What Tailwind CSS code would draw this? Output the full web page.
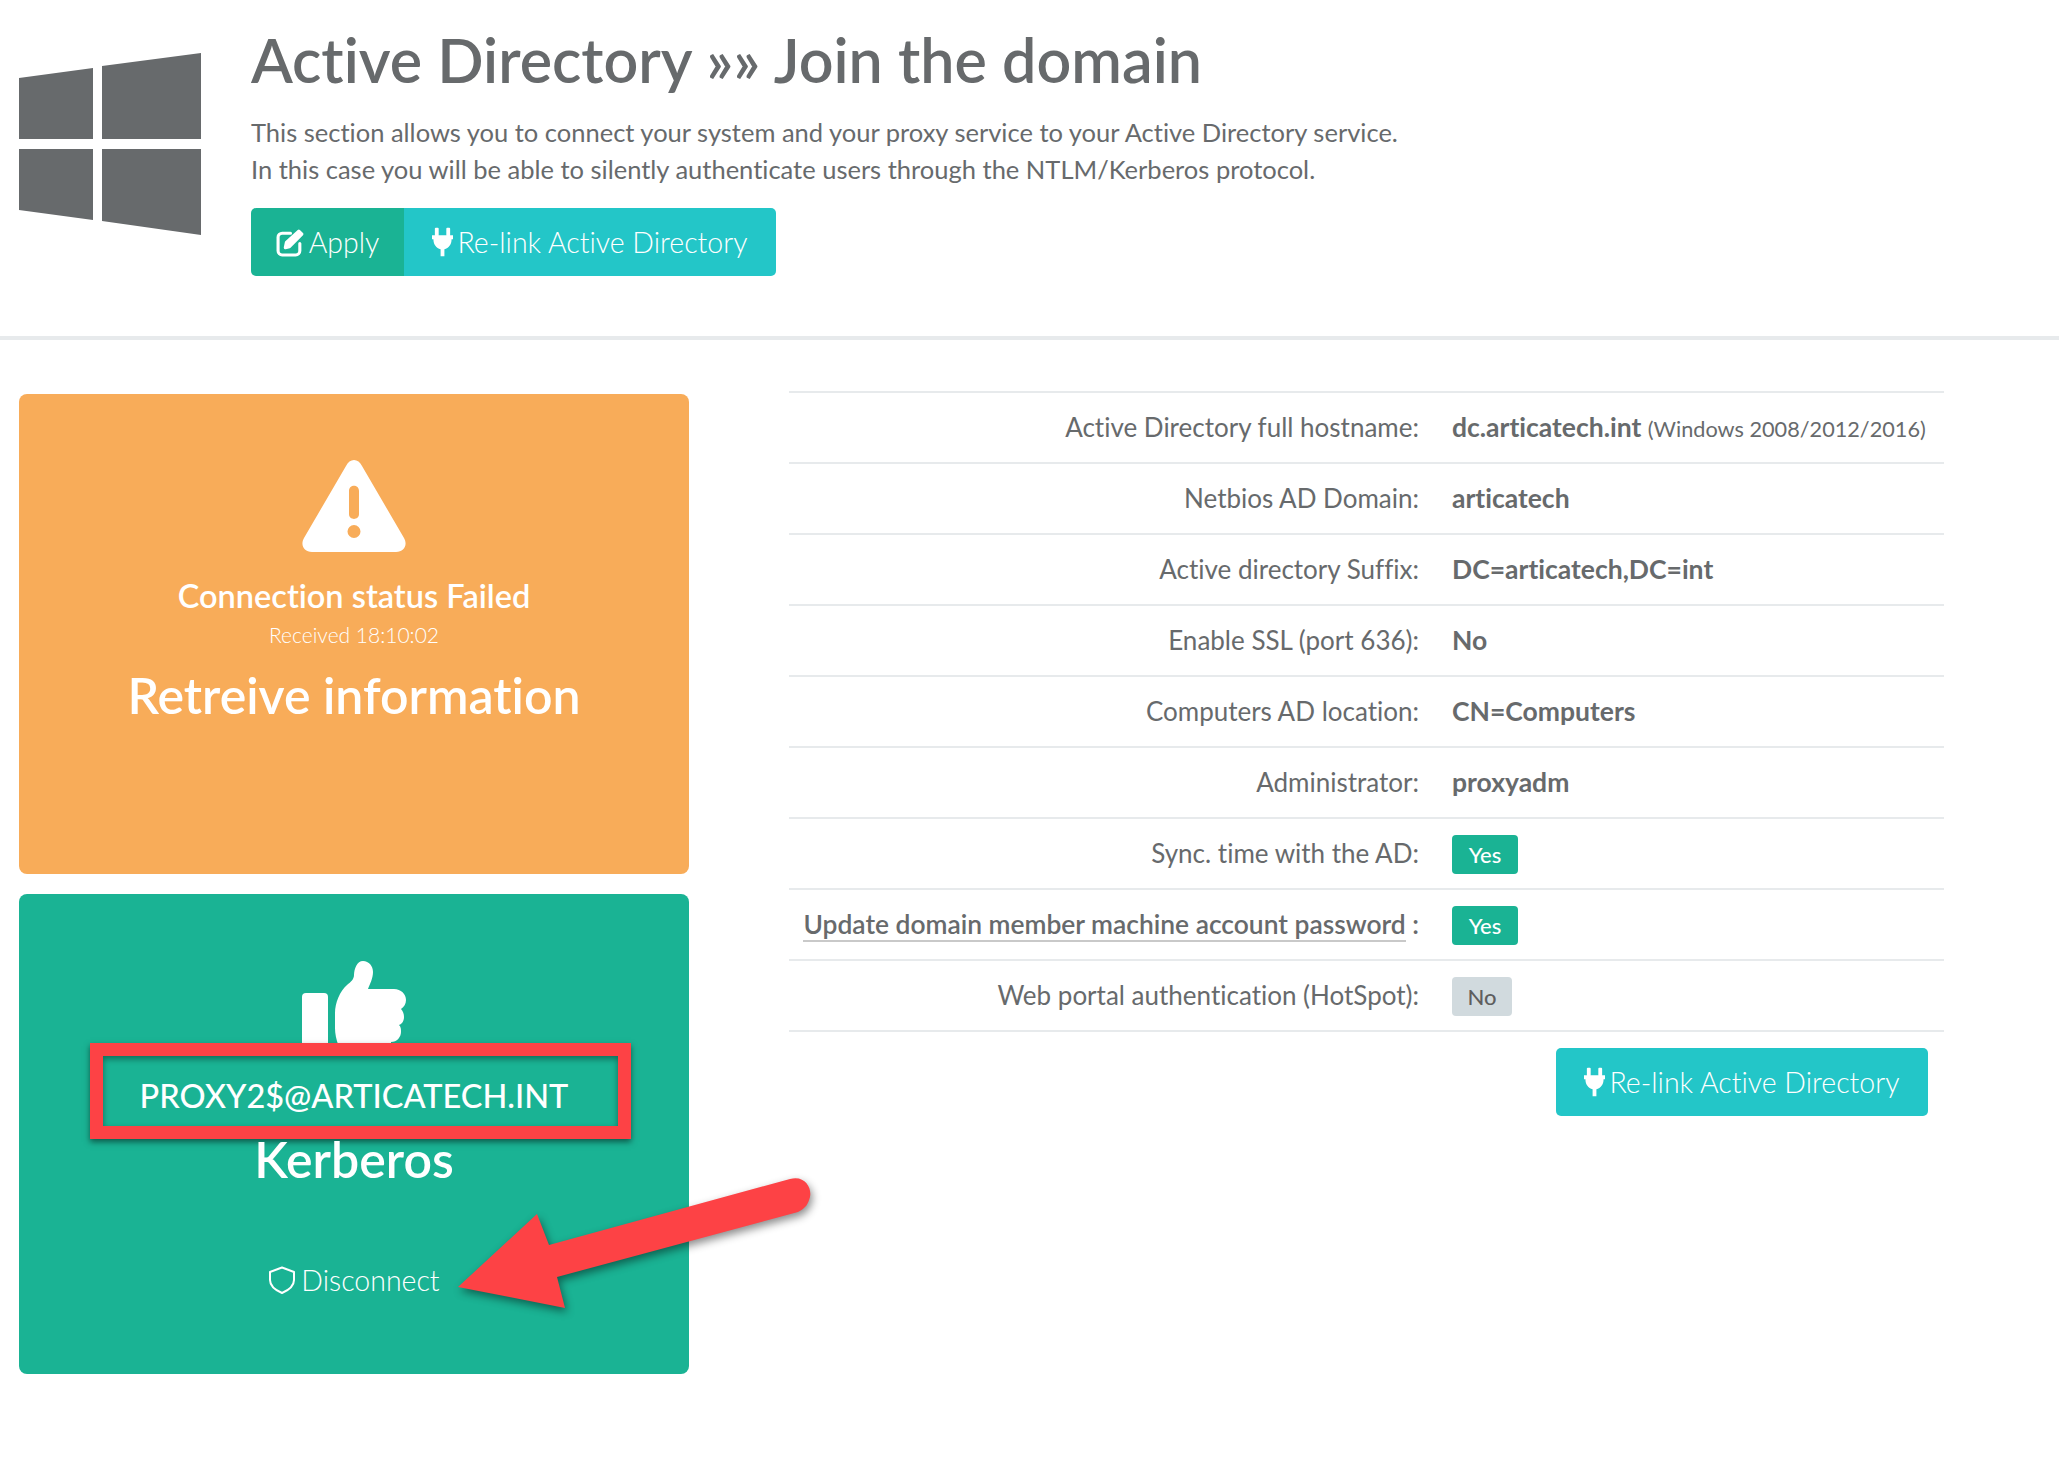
<!DOCTYPE html>
<html lang="en">
<head>
    <meta charset="UTF-8">
    <meta name="viewport" content="width=device-width, initial-scale=1.0">
    <title>Active Directory - Join the domain</title>
    <script src="https://cdn.jsdelivr.net/npm/@tailwindcss/browser@4"></script>
</head>
<body class="relative min-h-screen bg-white text-[#676a6c] font-['Lato','Open_Sans',sans-serif] [font-variant-ligatures:none] overflow-hidden">
    <!-- page heading -->
    <header class="flex h-[340px] pl-[19px] border-b-4 border-[#e7eaec]">
        <svg class="w-[182px] h-[182px] mt-[53px] shrink-0" viewBox="19 53 182 182" fill="#676a6c">
            <polygon points="19,78 93,68 93,139 19,139"/>
            <polygon points="102,66 201,53 201,139 102,139"/>
            <polygon points="19,149 93,149 93,220 19,210"/>
            <polygon points="102,149 201,149 201,235 102,221"/>
        </svg>
        <div class="ml-[50px]">
            <h1 class="mt-[25px] text-[61px] leading-[70px] font-semibold">Active Directory »» Join the domain</h1>
            <p class="mt-[19px] text-[25.5px] leading-[37px] font-normal">This section allows you to connect your system and your proxy service to your Active Directory service.<br>In this case you will be able to silently authenticate users through the NTLM/Kerberos protocol.</p>
            <div class="flex mt-[20px] h-[68px] w-[525px] rounded-[5px] overflow-hidden text-white text-[28.5px] font-light">
                <button class="flex items-center justify-center w-[153px] bg-[#1ab394]">
                    <svg class="w-[29px] h-[29px] mr-[4px]" viewBox="0 0 28 28" fill="none" stroke="#fff" stroke-width="3" stroke-linecap="round" stroke-linejoin="round">
                        <path d="M14 5H6a4 4 0 0 0-4 4v13a4 4 0 0 0 4 4h13a4 4 0 0 0 4-4v-7"/>
                        <path d="M10 14 22 3l3 3-12 12-4 1z" fill="#fff"/>
                    </svg>
                    Apply
                </button>
                <button class="flex items-center justify-center flex-1 bg-[#23c6c8]">
                    <svg class="w-[21px] h-[30px] mr-[4px]" viewBox="0 0 22 30" fill="#fff">
                        <rect x="3" y="0" width="4" height="9" rx="1"/><rect x="15" y="0" width="4" height="9" rx="1"/>
                        <path d="M0 8h22v4h-1.500c0 6-3 9-7.500 10.500V30h-4v-7.500C4.500 21 1.500 18 1.500 12H0z"/>
                    </svg>
                    Re-link Active Directory
                </button>
            </div>
        </div>
    </header>

    <main class="flex pl-[19px] pt-[54px]">
        <!-- status cards -->
        <section class="w-[670px] shrink-0 flex flex-col gap-[20px] text-white text-center">
            <div class="h-[480px] pt-[66px] rounded-[8px] bg-[#f8ac59]">
                <svg class="block mx-auto w-[104px] h-[92px]" viewBox="0 0 104 92">
                    <path fill="#fff" fill-rule="evenodd" d="M44 6c3.500-8 12.500-8 16 0l42 72c4 7 0 14-8 14H10C2 92-2 85 2 78zM47 54c0 6.500 10 6.500 10 0V31c0-7-10-7-10 0zM52 65a6.500 6.500 0 1 0 0 13 6.500 6.500 0 0 0 0-13z"/>
                </svg>
                <p class="mt-[24px] text-[32.5px] leading-[40px] font-semibold">Connection status Failed</p>
                <p class="mt-[5px] text-[21px] leading-[28px] font-light">Received 18:10:02</p>
                <h2 class="mt-[15px] text-[50px] leading-[62px] font-semibold">Retreive information</h2>
            </div>
            <div class="relative h-[480px] pt-[67px] rounded-[8px] bg-[#1ab394]">
                <svg class="block mx-auto w-[104px] h-[100px]" viewBox="302 961 104 100" fill="#fff">
                    <rect x="302" y="993" width="26" height="68" rx="4"/>
                    <path d="M354 975c0-6 3-14 9-14 6 0 10 5 10 11 0 6-3 12-5 17h26c7 0 12 5 12 11 0 4-2 7-5 9 2 2 3 5 3 8 0 4-2 7-5 8 2 2 2 4 2 7 0 5-4 10-10 10v19h-42c-9-8-14-22-14-33V1013c0-10 5-22 12-28 4-3 7-6 7-10z"/>
                </svg>
                <div class="absolute left-[71px] top-[149px] w-[541px] h-[96px] bg-[#1ab394] border-[13px] border-[#fd4245] shadow-[0_3px_6px_rgba(0,0,0,0.5),inset_0_3px_6px_rgba(0,0,0,0.4)]"></div>
                <p class="relative z-10 mt-[15px] text-[32.5px] leading-[40px] font-medium">PROXY2$@ARTICATECH.INT</p>
                <h2 class="relative z-10 mt-[12px] text-[50px] leading-[62px] font-semibold">Kerberos</h2>
                <a class="flex items-center justify-center mt-[72px] text-[28.5px] leading-[36px] font-light">
                    <svg class="w-[28px] h-[28px] mr-[5px]" viewBox="0 0 28 28" fill="none" stroke="#fff" stroke-width="2" stroke-linejoin="round">
                        <path d="M14 1.500 26 6v8c0 6-5 10-12 13C7 24 2 20 2 14V6z"/>
                    </svg>
                    Disconnect
                </a>
            </div>
        </section>

        <!-- settings table -->
        <section class="ml-[100px] w-[1155px] shrink-0">
            <table class="w-full border-collapse -mt-[3px] text-[26px]">
                <tbody>
                    <tr class="h-[71px] border-y-2 border-[#e7eaec]"><td class="w-[663px] pr-[33px] text-right font-normal">Active Directory full hostname:</td><td class="font-bold text-[26.5px]">dc.articatech.int <span class="text-[21.7px] font-normal">(Windows 2008/2012/2016)</span></td></tr>
                    <tr class="h-[71px] border-b-2 border-[#e7eaec]"><td class="pr-[33px] text-right font-normal">Netbios AD Domain:</td><td class="font-bold text-[26.5px]">articatech</td></tr>
                    <tr class="h-[71px] border-b-2 border-[#e7eaec]"><td class="pr-[33px] text-right font-normal">Active directory Suffix:</td><td class="font-bold text-[26.5px]">DC=articatech,DC=int</td></tr>
                    <tr class="h-[71px] border-b-2 border-[#e7eaec]"><td class="pr-[33px] text-right font-normal">Enable SSL (port 636):</td><td class="font-bold text-[26.5px]">No</td></tr>
                    <tr class="h-[71px] border-b-2 border-[#e7eaec]"><td class="pr-[33px] text-right font-normal">Computers AD location:</td><td class="font-bold text-[26.5px]">CN=Computers</td></tr>
                    <tr class="h-[71px] border-b-2 border-[#e7eaec]"><td class="pr-[33px] text-right font-normal">Administrator:</td><td class="font-bold text-[26.5px]">proxyadm</td></tr>
                    <tr class="h-[71px] border-b-2 border-[#e7eaec]"><td class="pr-[33px] text-right font-normal">Sync. time with the AD:</td><td><span class="inline-flex items-center justify-center w-[66px] h-[39px] rounded-[4px] bg-[#1ab394] text-white text-[22px] font-medium align-middle">Yes</span></td></tr>
                    <tr class="h-[71px] border-b-2 border-[#e7eaec]"><td class="pr-[33px] text-right font-semibold text-[26.4px]"><span class="border-b-2 border-[#c9c9c9]">Update domain member machine account password</span> :</td><td><span class="inline-flex items-center justify-center w-[66px] h-[39px] rounded-[4px] bg-[#1ab394] text-white text-[22px] font-medium align-middle">Yes</span></td></tr>
                    <tr class="h-[71px] border-b-2 border-[#e7eaec]"><td class="pr-[33px] text-right font-normal">Web portal authentication (HotSpot):</td><td><span class="inline-flex items-center justify-center w-[60px] h-[39px] rounded-[4px] bg-[#d1dade] text-[#5e5e5e] text-[22px] font-medium align-middle">No</span></td></tr>
                </tbody>
            </table>
            <div class="flex justify-end mt-[16px] pr-[16px]">
                <button class="flex items-center justify-center w-[372px] h-[68px] rounded-[5px] bg-[#23c6c8] text-white text-[28.5px] font-light">
                    <svg class="w-[21px] h-[30px] mr-[4px]" viewBox="0 0 22 30" fill="#fff">
                        <rect x="3" y="0" width="4" height="9" rx="1"/><rect x="15" y="0" width="4" height="9" rx="1"/>
                        <path d="M0 8h22v4h-1.500c0 6-3 9-7.500 10.500V30h-4v-7.500C4.500 21 1.500 18 1.500 12H0z"/>
                    </svg>
                    Re-link Active Directory
                </button>
            </div>
        </section>
    </main>

    <!-- annotation arrow drawn over the screenshot -->
    <svg class="absolute left-0 top-0 pointer-events-none drop-shadow-[2px_4px_4px_rgba(0,0,0,0.45)]" width="2059" height="1463" viewBox="0 0 2059 1463">
        <path fill="#fd4245" d="M458 1287 537 1214 549 1245 790 1179C805 1175 812 1188 810 1197 808 1204 806 1208 798 1212L557 1277 565 1308Z"/>
    </svg>
</body>
</html>
